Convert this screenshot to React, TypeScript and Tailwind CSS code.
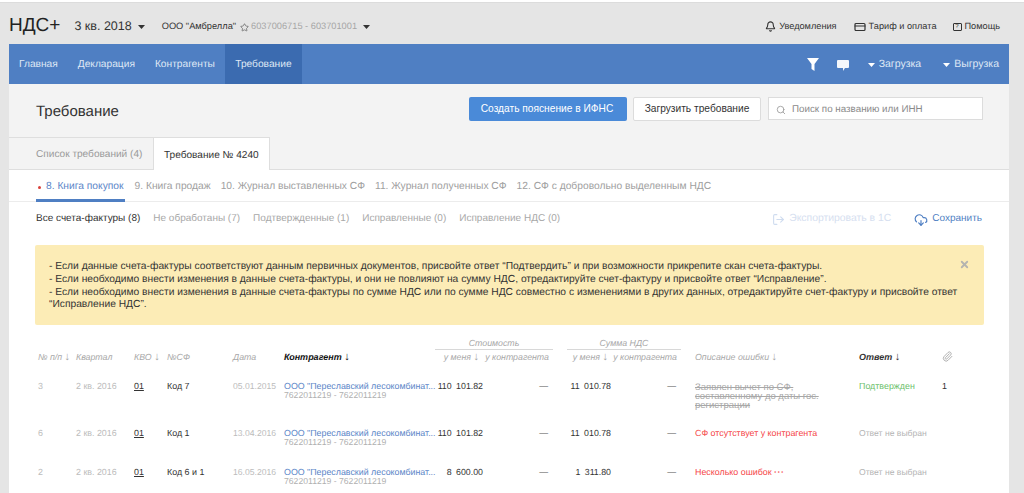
import { Bell, CloudDownload, CreditCard, LogOut, Paperclip, Search, Star, X } from "lucide-react";

const grid =
  "grid grid-cols-[38px_58px_33px_66px_51px_150px_49px_66px_62px_66px_182px_83px_40px]";

// Small caret used in the header and nav dropdowns
function Caret({ className = "" }: { className?: string }) {
  return (
    <svg width="7" height="4" viewBox="0 0 7 4" className={className} fill="currentColor">
      <path d="M0 0h7L3.5 4z" />
    </svg>
  );
}

function SortArrow({ className = "" }: { className?: string }) {
  return <span className={`not-italic text-[11px] leading-none ${className}`}>↓</span>;
}

const tabs = ["8. Книга покупок", "9. Книга продаж", "10. Журнал выставленных СФ", "11. Журнал полученных СФ", "12. СФ с добровольно выделенным НДС"];
const filters = ["Не обработаны (7)", "Подтвержденные (1)", "Исправленные (0)", "Исправление НДС (0)"];

const rows = [
  { n: "3", kvo: "Код 7", date: "05.01.2015", mine: "110 101.82", vat: "11 010.78", h: "h-[47px]" },
  { n: "6", kvo: "Код 1", date: "13.04.2016", mine: "110 101.82", vat: "11 010.78", h: "h-[39px]" },
  { n: "2", kvo: "Код 6 и 1", date: "16.05.2016", mine: "8 600.00", vat: "1 311.80", h: "h-[39px]" },
];

function ErrorCell({ index }: { index: number }) {
  if (index === 0) {
    return (
      <div className="mt-px pl-[18px] pr-6 text-[9.5px] text-[#a8a8a8] line-through">
        Заявлен вычет по СФ, составленному до даты гос. регистрации
      </div>
    );
  }
  if (index === 1) {
    return <div className="pl-[18px] text-[#f5484a] whitespace-nowrap">СФ отсутствует у контрагента</div>;
  }
  return (
    <div className="pl-[18px] text-[#f5484a] whitespace-nowrap">
      Несколько ошибок <span className="font-bold tracking-[0.5px]">···</span>
    </div>
  );
}

export default function App() {
  return (
    <div className="h-[493px] w-[1024px] overflow-hidden bg-[#e5e5e5] font-['Liberation_Sans',sans-serif] text-[#333] [text-rendering:geometricPrecision]">
      <div className="h-[3px] border-b border-[#dcdcdc] bg-white" />

      {/* Top bar */}
      <div className="flex h-[41px] items-center pl-[9px] pr-6 pt-[7px]">
        <span className="text-[19px] leading-none text-[#222] mt-[-3px]">НДС+</span>
        <span className="ml-[14px] text-[12.5px] text-[#333] mt-[-2px]">3 кв. 2018</span>
        <Caret className="ml-[6px] text-[#333]" />
        <span className="ml-[17px] text-[9.25px] text-[#333]">ООО "Амбрелла"</span>
        <Star size={9} className="ml-[4px] text-[#666]" />
        <span className="ml-[2px] text-[9.25px] text-[#a5a5a5]">6037006715 - 603701001</span>
        <Caret className="ml-[6px] text-[#333]" />
        <div className="ml-auto flex items-center text-[9.2px] text-[#333]">
          <Bell size={11} strokeWidth={2.4} />
          <span className="ml-[3px]">Уведомления</span>
          <CreditCard size={12} strokeWidth={2.4} className="ml-[17px]" />
          <span className="ml-[3px]">Тариф и оплата</span>
          <span className="ml-[16px] flex h-[8px] w-[9px] items-center justify-center rounded-[1px] border border-[#333] text-[6px] leading-none">?</span>
          <span className="ml-[3px]">Помощь</span>
        </div>
      </div>

      <div className="mx-[9px] w-[1000px]">
        {/* Nav */}
        <div className="flex h-[40px] items-stretch bg-[#4f7fc3] text-[10.2px] text-[#dfe8f5]">
          <div className="flex items-center gap-[20px] pl-[10px] pr-[10px] pt-[1px]">
            <span>Главная</span>
            <span>Декларация</span>
            <span>Контрагенты</span>
          </div>
          <div className="flex w-[77px] items-center justify-center bg-[#3b6bb0] pt-[1px]">Требование</div>
          <div className="ml-auto flex items-center pr-[10px] pt-[1px] text-[10.5px]">
            <svg width="12" height="13" viewBox="0 0 12 13" fill="white">
              <path d="M0 0h12L7.5 6v7l-3-2V6z" />
            </svg>
            <svg width="12" height="11" viewBox="0 0 12 11" fill="#f4f7fb" className="ml-[18px] mt-[2px]">
              <path d="M1 0h10a1 1 0 0 1 1 1v6a1 1 0 0 1-1 1H8l-2 3V8H1a1 1 0 0 1-1-1V1a1 1 0 0 1 1-1z" />
            </svg>
            <Caret className="ml-[19px] text-white" />
            <span className="ml-[4px]">Загрузка</span>
            <Caret className="ml-[22px] text-white" />
            <span className="ml-[4px]">Выгрузка</span>
          </div>
        </div>

        {/* Page head */}
        <div className="bg-[#f3f3f3]">
          <div className="flex h-[53px] items-start pl-[27px] pr-[26px] pt-[13px]">
            <span className="mt-[5px] text-[15px] leading-[20px] text-[#333]">Требование</span>
            <button className="ml-auto h-[24px] w-[158px] rounded-[2px] bg-[#4a8ad8] pr-[2px] text-[10.2px] text-white">
              Создать пояснение в ИФНС
            </button>
            <button className="ml-[6px] h-[24px] w-[128px] rounded-[2px] border border-[#dcdcdc] bg-white text-[10.2px] text-[#333]">
              Загрузить требование
            </button>
            <div className="ml-[7px] flex h-[23px] w-[215px] items-center border border-[#dcdcdc] bg-white pl-[7px] pt-[3px] text-[9.8px] text-[#8a8a8a]">
              <Search size={10} className="text-[#999]" />
              <span className="ml-[6px]">Поиск по названию или ИНН</span>
            </div>
          </div>
          <div className="flex h-[33px] border-b border-[#dedede]">
            <div className="flex w-[144px] items-center border-t border-[#dedede] pl-[27px] pt-[3px] text-[10.1px] text-[#9a9a9a]">
              Список требований (4)
            </div>
            <div className="mb-[-1px] flex w-[117px] items-center border border-b-0 border-[#dedede] bg-white pl-[10px] pt-[3px] text-[10.1px] text-[#333]">
              Требование № 4240
            </div>
          </div>
        </div>

        {/* White content */}
        <div className="h-[400px] bg-white">
          <div className="flex h-[32px] gap-[10px] border-b border-[#ececec] pl-[27px] text-[10.25px] text-[#a0a0a0]">
            {tabs.map((tab, i) => (
              <div
                key={tab}
                className={
                  i === 0
                    ? "flex h-[32px] items-center border-b-[3px] border-[#4f7fc3] pr-[1px] pt-[5px] text-[#5b86c8]"
                    : "flex h-[29px] items-center pt-[5px]"
                }
              >
                {i === 0 && <span className="ml-[2px] mr-[5px] h-[3px] w-[3px] rounded-full bg-[#d9403a]" />}
                {tab}
              </div>
            ))}
          </div>

          <div className="flex h-[43px] items-start pl-[27px] pr-[27px] pt-[11px] text-[10px] leading-[12px] text-[#a8a8a8]">
            <span className="text-[#333]">Все счета-фактуры (8)</span>
            {filters.map((f) => (
              <span key={f} className="ml-[13px]">{f}</span>
            ))}
            <LogOut size={13} className="ml-auto text-[#cfdcef]" />
            <span className="ml-[4px] text-[10.4px] text-[#d6e0f0]">Экспортировать в 1С</span>
            <CloudDownload size={14} className="ml-[23px] text-[#4f7fc3]" />
            <span className="ml-[4px] text-[#4f7fc3]">Сохранить</span>
          </div>

          {/* Alert */}
          <div className="ml-[26px] mr-[25px] flex h-[80px] rounded-[2px] bg-[#fcecb6] pl-[14px] pr-[14px] pt-[16px] text-[10.25px] leading-[12.8px] text-[#333]">
            <div className="w-[912px]">
              <p>- Если данные счета-фактуры соответствуют данным первичных документов, присвойте ответ “Подтвердить” и при возможности прикрепите скан счета-фактуры.</p>
              <p>- Если необходимо внести изменения в данные счета-фактуры, и они не повлияют на сумму НДС, отредактируйте счет-фактуру и присвойте ответ “Исправление”.</p>
              <p>- Если необходимо внести изменения в данные счета-фактуры по сумме НДС или по сумме НДС совместно с изменениями в других данных, отредактируйте счет-фактуру и присвойте ответ “Исправление НДС”.</p>
            </div>
            <X size={11} strokeWidth={4} className="ml-auto mt-[-2px] text-[#b4b4b0]" />
          </div>

          {/* Table */}
          <div className="mt-[13px] pl-[29px]">
            <div className={`${grid} text-[8.8px] italic text-[#a8a8a8]`}>
              <div className="col-start-7 col-span-2 mb-[1px] ml-[1px] mr-[-4px] border-b border-[#d8d8d8] text-center leading-[11px]">Стоимость</div>
              <div className="col-start-9 col-span-2 mb-[1px] ml-[18px] mr-[-4px] border-b border-[#d8d8d8] text-center leading-[11px]">Сумма НДС</div>
            </div>
            <div className={`${grid} h-[30px] items-start text-[8.8px] italic leading-[12px] text-[#a8a8a8]`}>
              <div>№ п/п <SortArrow /></div>
              <div>Квартал</div>
              <div>КВО <SortArrow /></div>
              <div>№СФ</div>
              <div>Дата</div>
              <div className="text-[9px] font-bold text-[#111]">Контрагент <SortArrow className="font-normal" /></div>
              <div className="whitespace-nowrap pr-[4px] text-right">у меня <SortArrow /></div>
              <div className="whitespace-nowrap text-right">у контрагента</div>
              <div className="whitespace-nowrap pr-[3px] text-right">у меня <SortArrow /></div>
              <div className="whitespace-nowrap text-right">у контрагента</div>
              <div className="pl-[18px]">Описание ошибки <SortArrow /></div>
              <div className="text-[9px] font-bold text-[#333]">Ответ <SortArrow className="font-normal" /></div>
              <div><Paperclip size={11} className="text-[#aaa]" /></div>
            </div>

            {rows.map((r, i) => (
              <div key={r.n} className={`${grid} ${r.h} items-start pt-[1px] text-[8.9px] leading-[9px]`}>
                <div className="text-[#bcbcbc]">{r.n}</div>
                <div className="text-[#bcbcbc]">2 кв. 2016</div>
                <div className="text-[#333] underline">01</div>
                <div className="text-[#333]">{r.kvo}</div>
                <div className="text-[8.6px] text-[#bcbcbc]">{r.date}</div>
                <div>
                  <div className="whitespace-nowrap text-[8.85px] text-[#5b86c8]">ООО "Переславский лесокомбинат...</div>
                  <div className="text-[8.65px] text-[#b0b0b0]">7622011219 - 7622011219</div>
                </div>
                <div className="text-right text-[8.8px] text-[#333] [word-spacing:2px]">{r.mine}</div>
                <div className="pr-[1px] text-right text-[#555]">—</div>
                <div className="text-right text-[8.8px] text-[#333] [word-spacing:2px]">{r.vat}</div>
                <div className="pr-[1px] text-right text-[#555]">—</div>
                <ErrorCell index={i} />
                {i === 0 ? (
                  <div className="text-[#6cbf6c]">Подтвержден</div>
                ) : (
                  <div className="whitespace-nowrap text-[8.6px] text-[#b4b4b4]">Ответ не выбран</div>
                )}
                <div className="text-[#333]">{i === 0 ? "1" : ""}</div>
              </div>
            ))}
          </div>
        </div>
      </div>
    </div>
  );
}
